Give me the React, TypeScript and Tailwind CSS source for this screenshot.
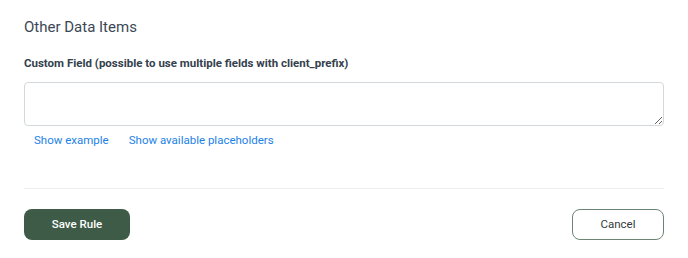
export default function App() {
  return (
    <div className="w-[688px] h-[258px] bg-white font-['Roboto',sans-serif] px-6 pt-[18px]">
      <h2 className="text-[15px] leading-[18px] text-[#3b4754]">Other Data Items</h2>

      <label className="mt-[20px] block text-[11.5px] leading-[14px] font-bold text-[#34414d]">
        Custom Field (possible to use multiple fields with client_prefix)
      </label>

      <textarea className="mt-[12px] block w-full h-[44px] rounded border border-[#d3d8dd] px-3 py-2 text-[12px] outline-none" />

      <div className="mt-[7px] flex gap-5 px-[10px] text-[11.5px] leading-[14px] text-[#1c82e6]">
        <a href="#">Show example</a>
        <a href="#">Show available placeholders</a>
      </div>

      <div className="mt-[41px] border-t border-[#eceef2]" />

      <div className="mt-[20px] flex items-center justify-between">
        <button className="w-[106px] h-[31px] rounded-lg bg-[#3d5b46] text-[11.5px] font-medium text-white">
          Save Rule
        </button>
        <button className="w-[92px] h-[31px] rounded-lg border border-[#6b8574] bg-white text-[11.5px] text-[#333a40]">
          Cancel
        </button>
      </div>
    </div>
  );
}
